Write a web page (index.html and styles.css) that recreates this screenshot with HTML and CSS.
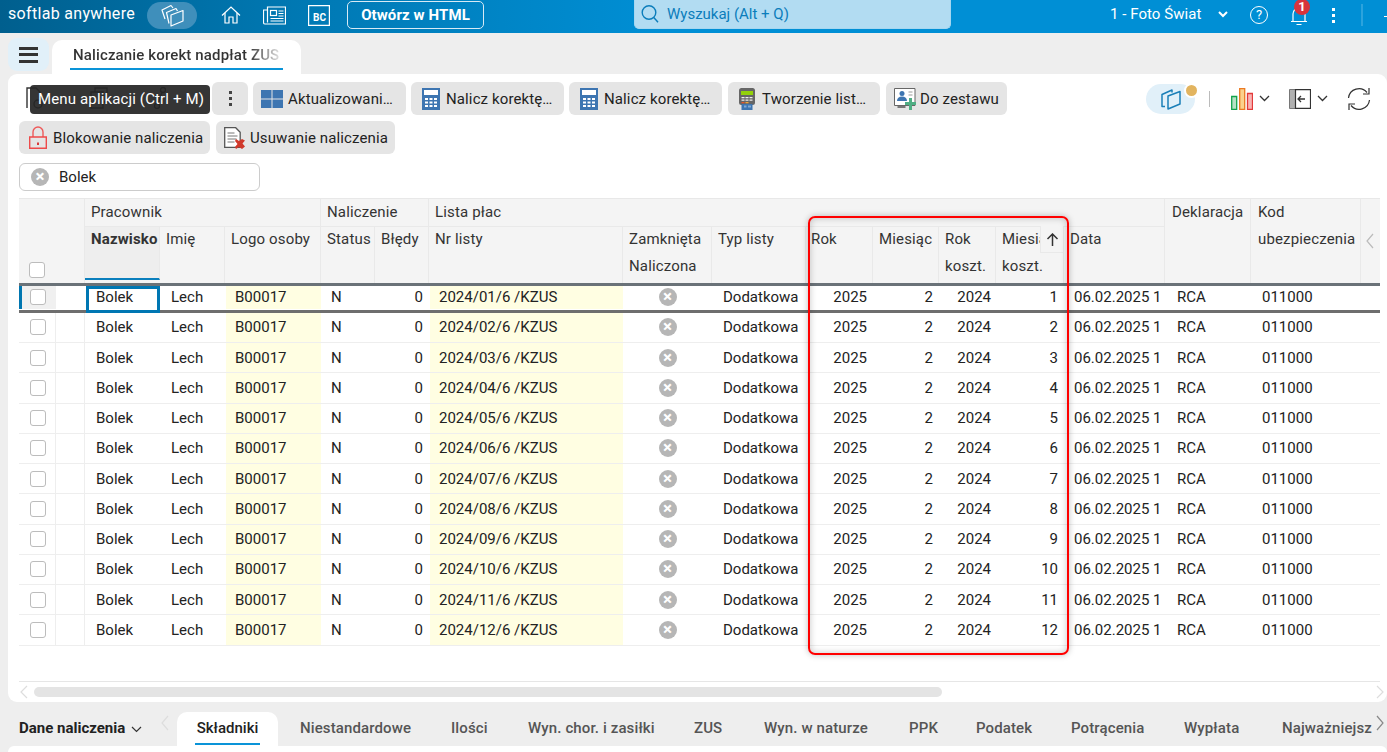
FILE: index.html
```html
<!DOCTYPE html>
<html lang="pl">
<head>
<meta charset="utf-8">
<title>Naliczanie korekt nadpłat ZUS</title>
<link rel="stylesheet" href="styles.css">
</head>
<body>
<header class="topbar">
  <div class="brand">softlab anywhere</div>
  <div class="brand-pill">
    <svg width="24" height="24" viewBox="0 0 24 24" fill="none" stroke="#fff" stroke-width="1.200" stroke-linejoin="round"><path d="M11 12 23 7.500V18L11 23Z"/><path d="M9 20.500 6.500 9.500 16 5.500l1.500 2.500"/><path d="M5 16 2 7 11 2.500l2 2.500"/></svg>
  </div>
  <nav class="topnav">
    <svg class="ti-home" width="20" height="20" viewBox="0 0 20 20" fill="none" stroke="#fff" stroke-width="1.200"><path d="M1 10.500 10 2l9 8.500"/><path d="M4 8v10h4v-6h4v6h4V8"/></svg>
    <svg class="ti-news" width="23" height="19" viewBox="0 0 23 19" fill="none" stroke="#fff" stroke-width="1.200"><path d="M4.500 1h18v17H2a1.500 1.500 0 0 1-1.500-1.500V4h4z"/><path d="M4.500 4v12.500"/><rect x="7.500" y="4.500" width="6" height="5"/><path d="M15.500 5h5M15.500 7.500h5M15.500 10h5M7.500 12.500h13M7.500 15h13"/></svg>
    <svg class="ti-bc" width="22" height="21" viewBox="0 0 22 21" fill="none"><path d="M.6.600h20.800v19.800H.6z" stroke="#fff" stroke-width="1.200"/><text x="5" y="16" class="bc-text">BC</text></svg>
    <button class="open-html">Otwórz w HTML</button>
  </nav>
  <div class="search">
    <svg width="18" height="20" viewBox="0 0 18 20" fill="none" stroke="#0b7dbb" stroke-width="1.400"><circle cx="8" cy="8.500" r="6.800"/><path d="m12.800 13.500 4.200 4.800"/></svg>
    <span>Wyszukaj (Alt + Q)</span>
  </div>
  <div class="company">1 - Foto Świat</div>
  <svg class="ti-chev" width="10" height="7" viewBox="0 0 10 7" fill="none" stroke="#fff" stroke-width="2"><path d="m1 1 4 4 4-4"/></svg>
  <div class="help">?</div>
  <div class="bell">
    <svg width="18" height="20" viewBox="0 0 18 20" fill="none" stroke="#fff" stroke-width="1.200"><path d="M1 15.500h16M3 15.500V8a6 6 0 0 1 12 0v7.500M6.500 18.500h5"/></svg>
    <span class="badge">1</span>
  </div>
  <div class="kebab-light"><i></i><i></i><i></i></div>
  <div class="top-sep"></div>
  <div class="top-dash"></div>
</header>

<div class="tabstrip">
  <button class="menu-btn" aria-label="Menu"><i></i><i></i><i></i></button>
  <div class="doc-tab"><span class="doc-tab-text">Naliczanie korekt nadpłat ZUS</span></div>
</div>

<main class="card">
  <div class="tooltip">Menu aplikacji (Ctrl + M)</div>
  <div class="toolbar">
    <div class="hidden-tools">
      <svg width="18" height="22" viewBox="0 0 18 22" fill="none" stroke="#333" stroke-width="1.400"><path d="M1 21V1h9l4 4v6"/><circle cx="12" cy="17" r="4"/></svg>
      <svg width="18" height="22" viewBox="0 0 18 22" fill="none" stroke="#333" stroke-width="1.400"><path d="M1 5h12v16H1zM5 5V1h12v14h-4"/></svg>
      <svg width="12" height="22" viewBox="0 0 12 22" fill="none" stroke="#333" stroke-width="1.400"><circle cx="9" cy="3" r="2.500"/><circle cx="3" cy="19" r="2.500"/><path d="M8 5 4 17"/></svg>
    </div>
    <button class="tbtn kebab-btn" aria-label="Więcej"><i></i><i></i><i></i></button>
    <button class="tbtn w153 pad-win">
      <svg width="22" height="18" viewBox="0 0 22 18" fill="#3d75b1"><path d="M0 0h10.500v8.500H0zM11.500 0H22v8.500H11.500zM0 9.500h10.500V18H0zM11.500 9.500H22V18H11.500z"/></svg>
      <span class="lbl">Aktualizowani…</span>
    </button>
    <button class="tbtn w153">
      <svg width="18" height="22" viewBox="0 0 18 22"><path d="M0 0h18v22H0z" fill="#3d75b1"/><path d="M2 2h14v5H2z" fill="#fff"/><path d="M3 10h3v2H3zM7.500 10h3v2h-3zM12 10h3v2h-3zM3 13.500h3v2H3zM7.500 13.500h3v2h-3zM12 13.500h3v2h-3zM3 17h3v2H3zM7.500 17h3v2h-3zM12 17h3v2h-3z" fill="#fff"/></svg>
      <span class="lbl">Nalicz korektę…</span>
    </button>
    <button class="tbtn w153">
      <svg width="18" height="22" viewBox="0 0 18 22"><path d="M0 0h18v22H0z" fill="#3d75b1"/><path d="M2 2h14v5H2z" fill="#fff"/><path d="M3 10h3v2H3zM7.500 10h3v2h-3zM12 10h3v2h-3zM3 13.500h3v2H3zM7.500 13.500h3v2h-3zM12 13.500h3v2h-3zM3 17h3v2H3zM7.500 17h3v2h-3zM12 17h3v2h-3z" fill="#fff"/></svg>
      <span class="lbl">Nalicz korektę…</span>
    </button>
    <button class="tbtn w152 shift1">
      <svg width="17" height="22" viewBox="0 0 17 22"><rect x="0" y="0" width="16" height="17" rx="2.500" fill="#666"/><path d="M2 3h12v4H2z" fill="#93d10a"/><path d="M2.500 9h3v1.300h-3zM6.500 9h3v1.300h-3zM10.500 9h3v1.300h-3zM2.500 11.500h3v1.300h-3zM6.500 11.500h3v1.300h-3zM10.500 11.500h3v1.300h-3z" fill="#eee"/><path d="M2.500 14h3v1.300h-3z" fill="#e2552b"/><path d="M6.500 14h3v1.300h-3z" fill="#eda33b"/><path d="M2.500 16h11v6h-11z" fill="#3d75b1"/><path d="M5 17.500h2.500v2H5zM9 17.500h3v2H9z" fill="#7fa7d4"/></svg>
      <span class="lbl">Tworzenie list…</span>
    </button>
    <button class="tbtn w121 shift1 pad-zest">
      <svg width="22" height="22" viewBox="0 0 22 22"><path d="M.5.500h20.500v17H.5z" fill="#fff" stroke="#666"/><path d="M3.500 18h8v2h-8z" fill="#777"/><circle cx="8" cy="5.500" r="2.500" fill="#3d75b1"/><path d="M3 13c0-3 2-4.500 5-4.500s5 1.500 5 4.500z" fill="#3d75b1"/><path d="M14.500 4h4M14.500 7h4" stroke="#999"/><path d="M15 10h3v4h4v3h-4v5h-3v-5h-4v-3h4z" fill="#4fae84"/></svg>
      <span class="lbl">Do zestawu</span>
    </button>
    <div class="view-tools">
      <div class="view-pill">
        <svg width="22" height="22" viewBox="0 0 22 22" fill="none" stroke="#1a7fb8" stroke-width="1.500" stroke-linejoin="round"><path d="M8 8 20 3.500V16L8 21Z"/><path d="M5 18.500H2V6.500L12 2v2.500"/></svg>
        <span class="view-dot"></span>
      </div>
      <span class="view-sep"></span>
      <svg class="vt-chart" width="22" height="22" viewBox="0 0 22 22"><path d="M.7 8.500h5v12.800h-5z" fill="#b6e2c5" stroke="#12a24c" stroke-width="1.300"/><path d="M8.700.7h5v20.600h-5z" fill="#fbd28c" stroke="#ec7a22" stroke-width="1.300"/><path d="M16.500 5.500h5v15.800h-5z" fill="#f8b4b4" stroke="#e23a3a" stroke-width="1.300"/></svg>
      <svg class="vt-chev" width="11" height="7" viewBox="0 0 11 7" fill="none" stroke="#333" stroke-width="1.300"><path d="m1 1 4.500 4.500L10 1"/></svg>
      <svg class="vt-panel" width="22" height="20" viewBox="0 0 22 20"><path d="M.5.500h6v19h-6z" fill="#b0b0b0" stroke="#777"/><path d="M6.500.700h15v18.600h-15z" fill="#fff" stroke="#333" stroke-width="1.200"/><path d="M16 10h-7M12 7l-3 3 3 3" fill="none" stroke="#333" stroke-width="1.300"/></svg>
      <svg class="vt-chev" width="11" height="7" viewBox="0 0 11 7" fill="none" stroke="#333" stroke-width="1.300"><path d="m1 1 4.500 4.500L10 1"/></svg>
      <svg class="vt-refresh" width="24" height="24" viewBox="0 0 24 24" fill="none" stroke="#333" stroke-width="1.200"><path d="M1.500 11A10.500 10.500 0 0 1 20 5.500"/><path d="M22 1v6h-6"/><path d="M22.500 13A10.500 10.500 0 0 1 4 18.500"/><path d="M2 23v-6h6"/></svg>
    </div>
  </div>
  <div class="toolbar row2">
    <button class="tbtn w191">
      <svg width="18" height="23" viewBox="0 0 18 23" fill="none"><path d="M4 11V6a5 5 0 0 1 10 0v5" stroke="#ee5a5a" stroke-width="1.400"/><path d="M.7 11h16.600v11.300H.7z" stroke="#ee4a4a" stroke-width="1.400"/><rect x="8" y="16.500" width="2" height="2.500" fill="#d83a3a"/></svg>
      <span class="lbl">Blokowanie naliczenia</span>
    </button>
    <button class="tbtn w179">
      <svg width="22" height="22" viewBox="0 0 22 22"><path d="M.7.700h11l4.500 4.500v15.100H.7z" fill="#fff" stroke="#555" stroke-width="1.300"/><path d="M3.500 6h7M3.500 9h10M3.500 12h9M3.500 15h7" stroke="#777"/><path d="m12 12 3 2 3-2 3 1.500-2.500 3 2.500 3L18 22l-3-2-3 2-1-2 2.500-3-2.500-3z" fill="#d0392b"/></svg>
      <span class="lbl">Usuwanie naliczenia</span>
    </button>
  </div>
  <div class="filter">
    <span class="x-circle">×</span>
    <span class="filter-text">Bolek</span>
  </div>

  <div class="grid-wrap">
    <div class="grid-head">
      <div class="h sel-col">
        <span class="cb"></span>
      </div>
      <div class="h span3">Pracownik</div>
      <div class="h span2">Naliczenie</div>
      <div class="h span8">Lista płac</div>
      <div class="h rows2 hdek">Deklaracja</div>
      <div class="h rows2 hkod">Kod<br>ubezpieczenia</div>
      <div class="h rows2 harrow"><svg width="8" height="16" viewBox="0 0 8 16" fill="none" stroke="#bbb" stroke-width="1.200"><path d="M7 1 1 8l6 7"/></svg></div>
      <div class="h h2 h-sorted">Nazwisko</div>
      <div class="h h2">Imię</div>
      <div class="h h2">Logo osoby</div>
      <div class="h h2">Status</div>
      <div class="h h2">Błędy</div>
      <div class="h h2">Nr listy</div>
      <div class="h h2">Zamknięta<br>Naliczona</div>
      <div class="h h2">Typ listy</div>
      <div class="h h2 h-rok">Rok</div>
      <div class="h h2">Miesiąc</div>
      <div class="h h2">Rok<br>koszt.</div>
      <div class="h h2 h-month">Miesiąc<br>koszt.
        <span class="sort-box"><svg width="13" height="13" viewBox="0 0 13 13" fill="none" stroke="#333" stroke-width="1.500"><path d="M6.500 13V1.500M1.500 6l5-5 5 5"/></svg></span>
      </div>
      <div class="h h2">Data</div>
    </div>

    <div class="row current">
      <div class="c c-cb"><span class="cb"></span></div><div class="c c-bl"></div><div class="c focus">Bolek</div><div class="c p11">Lech</div><div class="c y">B00017</div><div class="c">N</div><div class="c r">0</div><div class="c y">2024/01/6 /KZUS</div><div class="c ctr"><span class="x-circle">×</span></div><div class="c p11">Dodatkowa</div><div class="c r">2025</div><div class="c r">2</div><div class="c r">2024</div><div class="c r">1</div><div class="c">06.02.2025 1</div><div class="c p12">RCA</div><div class="c p11">011000</div>
    </div>
    <div class="row">
      <div class="c c-cb"><span class="cb"></span></div><div class="c c-bl"></div><div class="c p11">Bolek</div><div class="c p11">Lech</div><div class="c y">B00017</div><div class="c">N</div><div class="c r">0</div><div class="c y">2024/02/6 /KZUS</div><div class="c ctr"><span class="x-circle">×</span></div><div class="c p11">Dodatkowa</div><div class="c r">2025</div><div class="c r">2</div><div class="c r">2024</div><div class="c r">2</div><div class="c">06.02.2025 1</div><div class="c p12">RCA</div><div class="c p11">011000</div>
    </div>
    <div class="row">
      <div class="c c-cb"><span class="cb"></span></div><div class="c c-bl"></div><div class="c p11">Bolek</div><div class="c p11">Lech</div><div class="c y">B00017</div><div class="c">N</div><div class="c r">0</div><div class="c y">2024/03/6 /KZUS</div><div class="c ctr"><span class="x-circle">×</span></div><div class="c p11">Dodatkowa</div><div class="c r">2025</div><div class="c r">2</div><div class="c r">2024</div><div class="c r">3</div><div class="c">06.02.2025 1</div><div class="c p12">RCA</div><div class="c p11">011000</div>
    </div>
    <div class="row">
      <div class="c c-cb"><span class="cb"></span></div><div class="c c-bl"></div><div class="c p11">Bolek</div><div class="c p11">Lech</div><div class="c y">B00017</div><div class="c">N</div><div class="c r">0</div><div class="c y">2024/04/6 /KZUS</div><div class="c ctr"><span class="x-circle">×</span></div><div class="c p11">Dodatkowa</div><div class="c r">2025</div><div class="c r">2</div><div class="c r">2024</div><div class="c r">4</div><div class="c">06.02.2025 1</div><div class="c p12">RCA</div><div class="c p11">011000</div>
    </div>
    <div class="row">
      <div class="c c-cb"><span class="cb"></span></div><div class="c c-bl"></div><div class="c p11">Bolek</div><div class="c p11">Lech</div><div class="c y">B00017</div><div class="c">N</div><div class="c r">0</div><div class="c y">2024/05/6 /KZUS</div><div class="c ctr"><span class="x-circle">×</span></div><div class="c p11">Dodatkowa</div><div class="c r">2025</div><div class="c r">2</div><div class="c r">2024</div><div class="c r">5</div><div class="c">06.02.2025 1</div><div class="c p12">RCA</div><div class="c p11">011000</div>
    </div>
    <div class="row">
      <div class="c c-cb"><span class="cb"></span></div><div class="c c-bl"></div><div class="c p11">Bolek</div><div class="c p11">Lech</div><div class="c y">B00017</div><div class="c">N</div><div class="c r">0</div><div class="c y">2024/06/6 /KZUS</div><div class="c ctr"><span class="x-circle">×</span></div><div class="c p11">Dodatkowa</div><div class="c r">2025</div><div class="c r">2</div><div class="c r">2024</div><div class="c r">6</div><div class="c">06.02.2025 1</div><div class="c p12">RCA</div><div class="c p11">011000</div>
    </div>
    <div class="row">
      <div class="c c-cb"><span class="cb"></span></div><div class="c c-bl"></div><div class="c p11">Bolek</div><div class="c p11">Lech</div><div class="c y">B00017</div><div class="c">N</div><div class="c r">0</div><div class="c y">2024/07/6 /KZUS</div><div class="c ctr"><span class="x-circle">×</span></div><div class="c p11">Dodatkowa</div><div class="c r">2025</div><div class="c r">2</div><div class="c r">2024</div><div class="c r">7</div><div class="c">06.02.2025 1</div><div class="c p12">RCA</div><div class="c p11">011000</div>
    </div>
    <div class="row">
      <div class="c c-cb"><span class="cb"></span></div><div class="c c-bl"></div><div class="c p11">Bolek</div><div class="c p11">Lech</div><div class="c y">B00017</div><div class="c">N</div><div class="c r">0</div><div class="c y">2024/08/6 /KZUS</div><div class="c ctr"><span class="x-circle">×</span></div><div class="c p11">Dodatkowa</div><div class="c r">2025</div><div class="c r">2</div><div class="c r">2024</div><div class="c r">8</div><div class="c">06.02.2025 1</div><div class="c p12">RCA</div><div class="c p11">011000</div>
    </div>
    <div class="row">
      <div class="c c-cb"><span class="cb"></span></div><div class="c c-bl"></div><div class="c p11">Bolek</div><div class="c p11">Lech</div><div class="c y">B00017</div><div class="c">N</div><div class="c r">0</div><div class="c y">2024/09/6 /KZUS</div><div class="c ctr"><span class="x-circle">×</span></div><div class="c p11">Dodatkowa</div><div class="c r">2025</div><div class="c r">2</div><div class="c r">2024</div><div class="c r">9</div><div class="c">06.02.2025 1</div><div class="c p12">RCA</div><div class="c p11">011000</div>
    </div>
    <div class="row">
      <div class="c c-cb"><span class="cb"></span></div><div class="c c-bl"></div><div class="c p11">Bolek</div><div class="c p11">Lech</div><div class="c y">B00017</div><div class="c">N</div><div class="c r">0</div><div class="c y">2024/10/6 /KZUS</div><div class="c ctr"><span class="x-circle">×</span></div><div class="c p11">Dodatkowa</div><div class="c r">2025</div><div class="c r">2</div><div class="c r">2024</div><div class="c r">10</div><div class="c">06.02.2025 1</div><div class="c p12">RCA</div><div class="c p11">011000</div>
    </div>
    <div class="row">
      <div class="c c-cb"><span class="cb"></span></div><div class="c c-bl"></div><div class="c p11">Bolek</div><div class="c p11">Lech</div><div class="c y">B00017</div><div class="c">N</div><div class="c r">0</div><div class="c y">2024/11/6 /KZUS</div><div class="c ctr"><span class="x-circle">×</span></div><div class="c p11">Dodatkowa</div><div class="c r">2025</div><div class="c r">2</div><div class="c r">2024</div><div class="c r">11</div><div class="c">06.02.2025 1</div><div class="c p12">RCA</div><div class="c p11">011000</div>
    </div>
    <div class="row">
      <div class="c c-cb"><span class="cb"></span></div><div class="c c-bl"></div><div class="c p11">Bolek</div><div class="c p11">Lech</div><div class="c y">B00017</div><div class="c">N</div><div class="c r">0</div><div class="c y">2024/12/6 /KZUS</div><div class="c ctr"><span class="x-circle">×</span></div><div class="c p11">Dodatkowa</div><div class="c r">2025</div><div class="c r">2</div><div class="c r">2024</div><div class="c r">12</div><div class="c">06.02.2025 1</div><div class="c p12">RCA</div><div class="c p11">011000</div>
    </div>
    <div class="annot"></div>
  </div>
  <div class="hscroll">
    <svg width="8" height="14" viewBox="0 0 8 14" fill="none" stroke="#ddd" stroke-width="1.200"><path d="M7 1 1 7l6 6"/></svg>
    <div class="thumb"></div>
    <svg class="hs-right" width="8" height="14" viewBox="0 0 8 14" fill="none" stroke="#ddd" stroke-width="1.200"><path d="m1 1 6 6-6 6"/></svg>
  </div>
</main>

<footer class="bottombar">
  <div class="section-name">Dane naliczenia</div>
  <svg class="sec-chev" width="11" height="7" viewBox="0 0 11 7" fill="none" stroke="#333" stroke-width="1.200"><path d="m1 1 4.500 4.500L10 1"/></svg>
  <svg class="sec-left" width="8" height="16" viewBox="0 0 8 16" fill="none" stroke="#ddd" stroke-width="1.200"><path d="M7 1 1 8l6 7"/></svg>
  <div class="btab active"><span>Składniki</span></div>
  <div class="btabs">
    <span class="t1">Niestandardowe</span>
    <span class="t2">Ilości</span>
    <span class="t3">Wyn. chor. i zasiłki</span>
    <span class="t4">ZUS</span>
    <span class="t5">Wyn. w naturze</span>
    <span class="t6">PPK</span>
    <span class="t7">Podatek</span>
    <span class="t8">Potrącenia</span>
    <span class="t9">Wypłata</span>
    <span class="t10">Najważniejsz</span>
  </div>
  <svg class="sec-right" width="8" height="16" viewBox="0 0 8 16" fill="none" stroke="#888" stroke-width="1.200"><path d="m1 1 6 7-6 7"/></svg>
</footer>
<div class="bottom-sheet"></div>
</body>
</html>
```

FILE: styles.css
```css
* { box-sizing: border-box; }
html, body { margin: 0; padding: 0; height: 752px; overflow: hidden; }
body {
  font-family: Roboto, "Liberation Sans", sans-serif;
  font-size: 15px;
  color: #222;
  background: #eee;
  display: flex;
  flex-direction: column;
  width: 1387px;
}
button { font: inherit; color: inherit; border: 0; margin: 0; padding: 0; background: none; }
svg { flex: none; display: block; }

/* top bar */
.topbar {
  height: 33px;
  flex: none;
  display: flex;
  align-items: center;
  background: linear-gradient(90deg, #005f8e 0, #0079b4 22%, #008fd5 48%, #008fd5 100%);
  color: #fff;
  position: relative;
}
.brand { margin-left: 8px; width: 139px; font-size: 16px; letter-spacing: .32px; margin-top: -7px; white-space: nowrap; }
.brand-pill {
  width: 50px; height: 27px; border-radius: 14px;
  background: #3f8fbb;
  display: flex; align-items: center; justify-content: center;
  margin-top: -3px;
}
.topnav { display: flex; align-items: center; margin-left: 24px; margin-top: -3px; }
.ti-news { margin-left: 22px; }
.ti-bc { margin-left: 22px; }
.bc-text { font: 700 10px Roboto, sans-serif; fill: #fff; }
.open-html {
  margin-left: 17px; width: 137px; height: 28px;
  border: 1px solid #d7eaf5; border-radius: 5px;
  color: #fff; font-weight: 700; font-size: 15px; letter-spacing: .1px;
}
.search {
  margin-left: 150px; width: 317px; height: 29px;
  background: #b2dcf2; border-radius: 0 0 5px 5px;
  border: 1px solid #a5d7f1; border-top: 0;
  display: flex; align-items: center; gap: 8px; padding-left: 6px;
  color: #0b7dbb; margin-top: -4px;
}
.company { margin-left: 159px; margin-top: -5px; width: 108px; letter-spacing: .05px; }
.ti-chev { margin-top: -4px; }
.help {
  margin-left: 22px; width: 18px; height: 18px; border: 1.300px solid #fff; border-radius: 50%;
  font-size: 13px; line-height: 16px; text-align: center; margin-top: -4px;
}
.bell { margin-left: 22px; width: 20px; position: relative; margin-top: -2px; }
.badge {
  position: absolute; left: 4px; top: -7px; width: 16px; height: 16px; border-radius: 50%;
  background: #d8343c; color: #fff; font-size: 13px; font-weight: 700; line-height: 16px; text-align: center;
}
.kebab-light { margin-left: 22px; display: flex; flex-direction: column; gap: 3px; margin-top: -3px; }
.kebab-light i { width: 3px; height: 3px; background: #fff; display: block; }
.top-sep { margin-left: 26px; width: 2px; height: 22px; background: #2ca3dd; margin-top: -4px; }
.top-dash { margin-left: 21px; width: 3px; height: 1px; background: #fff; }

/* document tabs */
.tabstrip { height: 41px; flex: none; position: relative; display: flex; padding: 5px 0 0 8px; }
.menu-btn {
  width: 41px; height: 33px; background: #e1f0f9; border-radius: 9px;
  display: flex; flex-direction: column; gap: 3.500px; align-items: center; justify-content: center;
}
.menu-btn i { display: block; width: 19px; height: 3px; background: #333; }
.doc-tab {
  margin-left: 3px; margin-top: 2px; width: 249px; height: 34px;
  background: #fff; border-radius: 10px 10px 0 0; padding: 0 18px;
}
.doc-tab-text {
  display: block; height: 30px; line-height: 30px; padding: 0 3px;
  font-size: 15px; font-weight: 500; letter-spacing: .14px; white-space: nowrap; overflow: hidden;
  border-bottom: 2px solid #0a94d8; color: #222;
  background: linear-gradient(90deg, #333 84%, #ddd 98%);
  background-clip: text; -webkit-background-clip: text; -webkit-text-fill-color: transparent;
}

/* card */
.card {
  height: 628px; flex: none; margin-left: 8px;
  background: #fff; border-radius: 9px;
  padding: 8px 0 0 11px;
  position: relative;
  display: flex; flex-direction: column;
}
.tooltip {
  position: absolute; left: 22px; top: 11px; z-index: 5;
  width: 180px; height: 29px; border-radius: 4px;
  background: rgba(38,38,38,.93); color: #fff; line-height: 29px; padding-left: 8px; font-size: 15px; letter-spacing: .14px;
}
.toolbar { display: flex; height: 33px; flex: none; gap: 5px; padding-right: 16px; align-items: stretch; }
.toolbar.row2 { margin-top: 6px; gap: 6px; }
.hidden-tools { width: 188px; display: flex; gap: 46px; padding: 5px 0 0 7px; }
.tbtn {
  background: #e5e5e5; border-radius: 6px; display: flex; align-items: center; gap: 6px;
  padding: 0 0 0 11px; white-space: nowrap; overflow: hidden; color: #222; letter-spacing: .12px;
}
.lbl { text-align: left; }
.kebab-btn { width: 36px; flex-direction: column; justify-content: center; gap: 3px; padding: 0; }
.kebab-btn i { display: block; width: 3px; height: 3px; background: #444; }
.w153 { width: 153px; }
.w152 { width: 152px; }
.w121 { width: 121px; }
.w191 { width: 191px; padding-left: 10px; }
.w179 { width: 179px; padding-left: 8px; gap: 4px; }
.pad-win { padding-left: 8px; gap: 5px; }
.pad-zest { padding-left: 8px; gap: 4px; }
.shift1 { margin-left: 1px; }
.view-tools { margin-left: auto; display: flex; align-items: center; height: 33px; }
.view-pill {
  width: 49px; height: 30px; background: #e1f0f9; border-radius: 15px; position: relative;
  display: flex; align-items: center; justify-content: center;
}
.view-dot {
  position: absolute; left: 38px; top: -1px; width: 15px; height: 15px; border-radius: 50%;
  background: #e2b45f; border: 2px solid #fff;
}
.view-sep { width: 1px; height: 16px; background: #bbb; margin-left: 14px; }
.vt-chart { margin-left: 21px; }
.vt-panel { margin-left: 19px; }
.vt-chev { margin-left: 6px; }
.vt-refresh { margin-left: 19px; }

/* filter */
.filter {
  width: 241px; height: 28px; margin-top: 9px; flex: none;
  border: 1px solid #ccc; border-radius: 6px;
  display: flex; align-items: center; padding-left: 11px; gap: 10px;
}
.x-circle {
  display: inline-block; width: 18px; height: 18px; border-radius: 50%;
  background: #b6b6b6; color: #fff; font-weight: 700; font-size: 17px; line-height: 17px; text-align: center;
}

/* grid */
.grid-wrap {
  --cols: 37px 29px 75px 65px 96px 54px 54px 194px 89px 94px 67px 66px 57px 68px 101px 86px 110px 19px;
  margin-top: 7px; height: 484px; flex: none; width: 1361px; position: relative;
  border-bottom: 1px solid #e6e6e6;
}
.grid-head {
  display: grid; grid-template-columns: var(--cols); grid-template-rows: 27px 56.500px;
  height: 84.500px; background: #f4f4f4; border-top: 1px solid #e8e8e8;
}
.h {
  background: #f4f4f4; border-right: 1px solid #e9e9e9;
  padding: 0 6px; line-height: 27px; color: #333; letter-spacing: .15px;
  white-space: nowrap; overflow: hidden; position: relative;
}
.h2 { box-shadow: inset 0 1px #e9e9e9; }
.sel-col { grid-column: 1 / span 2; grid-row: 1 / span 2; position: relative; }
.sel-col .cb { position: absolute; left: 10px; top: 63px; }
.span3 { grid-column: span 3; }
.span2 { grid-column: span 2; }
.span8 { grid-column: span 8; }
.rows2 { grid-row: span 2; }
.hdek { padding-left: 7px; }
.hkod { padding-left: 7px; }
.harrow { display: flex; align-items: center; padding: 0 0 0 5px; border-right: 0; }
.h-sorted { background: #eee; font-weight: 700; border-bottom: 2px solid #0a7fbd; height: 54px; }
.h-rok { padding-left: 5px; }
.h-month { padding-right: 0; }
.sort-box {
  position: absolute; right: 0; top: 0; width: 23px; height: 27px; background: #f4f4f4;
  border-left: 1px solid #e9e9e9; border-bottom: 1px solid #e9e9e9;
  display: flex; align-items: center; justify-content: center;
}
.row {
  display: grid; grid-template-columns: var(--cols); height: 30.250px;
  border-bottom: 1px solid #eee;
}
.row.current { border-top: 3px solid #6a7278; border-bottom: 3px solid #6e6e6e; padding-bottom: 1px; position: relative; }
.c {
  padding: 0 6px 0 10px; display: flex; align-items: center; white-space: nowrap; overflow: hidden; min-width: 0;
}
.row .c:nth-child(13) { padding-right: 5px; }
.c-cb { padding: 0 0 0 11px; border-right: 1px solid #eee; }
.c-bl { border-right: 1px solid #eee; padding: 0; }
.current .c-cb { background: #f0f0f0; border-left: 3px solid #0076b0; padding-left: 8px; border-right: 0; }
.current .c-bl { border-right: 0; }
.p11 { padding-left: 11px; }
.p12 { padding-left: 12px; }
.y { background: #fffee2; margin-left: 1px; padding-left: 9px; }
.r { justify-content: flex-end; }
.ctr { justify-content: center; padding: 0; }
.focus {
  border: 3px solid #0077b3; margin: 0 0 -4px 1px; padding: 0 0 4px 7px; background: #fff; z-index: 1;
}
.cb {
  display: inline-block; width: 16px; height: 16px; background: #fff;
  border: 1px solid #bcbcbc; border-radius: 3px;
}
.annot {
  position: absolute; left: 789px; top: 18px;
  width: 261px; height: 439px;
  border: 2px solid #f00; border-radius: 7px;
  box-shadow: 0 0 6px rgba(0,0,0,.25), inset 0 0 7px rgba(0,0,0,.22);
  pointer-events: none; z-index: 3;
}
.hscroll { height: 20px; position: relative; display: flex; align-items: center; padding-left: 1px; }
.thumb { margin-left: 6px; width: 908px; height: 10px; border-radius: 5px; background: #e4e4e4; }
.hs-right { margin-left: auto; margin-right: 3px; }

/* bottom */
.bottombar { height: 44px; flex: none; display: flex; align-items: flex-start; position: relative; }
.section-name { margin: 17px 0 0 19px; font-weight: 700; width: 112px; color: #222; white-space: nowrap; }
.sec-chev { margin: 24px 0 0 0; }
.sec-left { margin: 13px 0 0 19px; }
.btab {
  margin: 10px 0 0 8px; width: 101px; height: 34px; background: #fff; border-radius: 10px 10px 0 0;
  padding: 0 18px; text-align: center;
}
.btab span { display: block; height: 33px; line-height: 33px; border-bottom: 2px solid #0a94d8; font-weight: 500; }
.btabs { position: relative; flex: 1; height: 44px; color: #555; font-weight: 500; overflow: hidden; letter-spacing: .12px; }
.btabs span { position: absolute; top: 17px; white-space: nowrap; }
.t1 { left: 22px; } .t2 { left: 173px; } .t3 { left: 250px; } .t4 { left: 416px; } .t5 { left: 486px; }
.t6 { left: 631px; } .t7 { left: 698px; } .t8 { left: 793px; } .t9 { left: 906px; }
.t10 { left: 1004px; }
.sec-right { position: absolute; left: 1376px; top: 13px; }
.bottom-sheet { flex: 1; margin-left: 8px; background: #fff; border-radius: 9px 9px 0 0; }
```
